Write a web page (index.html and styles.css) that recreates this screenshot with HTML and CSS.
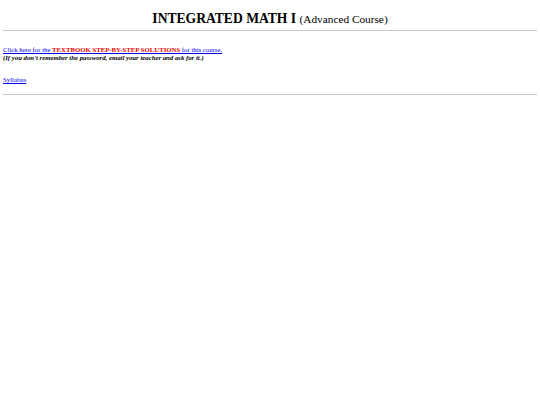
FILE: index.html
```html
<!DOCTYPE html>
<html>
<head>
<meta charset="utf-8">
<link rel="stylesheet" href="styles.css">
</head>
<body>
<h1 class="title">INTEGRATED MATH I <span class="sub">(Advanced Course)</span></h1>
<hr class="rule">
<p class="note"><a href="#" class="link">Click here for the <b class="red">TEXTBOOK STEP-BY-STEP SOLUTIONS</b> for this course.</a><br>
<b><i>(If you don't remember the password, email your teacher and ask for it.)</i></b></p>
<p class="syl"><a href="#" class="link">Syllabus</a></p>
<hr class="rule">
</body>
</html>
```
FILE: styles.css
```css
html, body { margin: 0; padding: 0; background: #fff; }
body { padding: 0 3px; font-family: "Liberation Serif", "Times New Roman", serif; color: #000; }
.title { text-align: center; font-size: 13.6px; font-weight: bold; margin: 11px 0 0 0; line-height: 16px; }
.sub { font-family: "Liberation Serif", "Times New Roman", serif; font-weight: normal; font-size: 11.3px; }
.rule { border: 0; border-top: 1px solid #c8c8c8; margin: 3px 0 0 0; height: 0; }
.note { font-size: 6.75px; line-height: 8px; margin: 15px 0 0 0; }
.link { color: #0000ee; }
.red { color: #ee0000; }
.syl { font-size: 6.75px; line-height: 8px; margin: 14px 0 10px 0; }
```
